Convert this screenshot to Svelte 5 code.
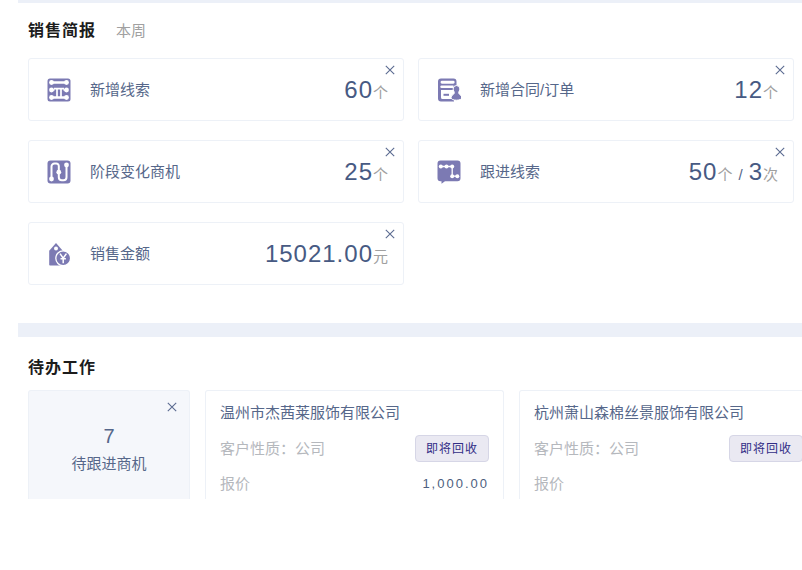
<script>
  let briefs = $state([
    { icon: 'lead', label: '新增线索', parts: [['60', '个']] },
    { icon: 'contract', label: '新增合同/订单', parts: [['12', '个']] },
    { icon: 'stage', label: '阶段变化商机', parts: [['25', '个']] },
    { icon: 'follow', label: '跟进线索', parts: [['50', '个'], ['3', '次']] },
    { icon: 'amount', label: '销售金额', parts: [['15021.00', '元']] },
  ]);

  let todoVisible = $state(true);

  const customers = [
    { name: '温州市杰茜莱服饰有限公司', kind: '公司', quote: '1,000.00' },
    { name: '杭州萧山森棉丝景服饰有限公司', kind: '公司', quote: '' },
  ];

  function removeBrief(item) {
    briefs = briefs.filter((b) => b !== item);
  }
</script>

{#snippet cross()}
  <svg width="10" height="10" viewBox="0 0 10 10" aria-hidden="true">
    <path d="M0.8 0.8l8.4 8.4M9.2 0.8l-8.4 8.4" fill="none" stroke="currentColor" stroke-width="1.1" />
  </svg>
{/snippet}

{#snippet icon(name)}
  <svg class="icon" width="24" height="24" viewBox="0 0 24 24" aria-hidden="true">
    {#if name === 'lead'}
      <rect x="0.5" y="0.5" width="23" height="23" rx="2.5" fill="#7c7ab3" />
      <g stroke="#fff" fill="none" stroke-width="2.4">
        <path d="M4.5 4.5h15M4.5 19.5h15" />
        <path d="M4.5 12h3M16.5 12h3M7 10.6h10M10 10.600v9M14 10.600v9" stroke-width="1.7" />
      </g>
      <g fill="#fff">
        <circle cx="4.5" cy="4.5" r="2.4" /><circle cx="19.5" cy="4.5" r="2.4" />
        <circle cx="4.5" cy="12" r="2.4" /><circle cx="19.5" cy="12" r="2.4" />
        <circle cx="4.5" cy="19.5" r="2.4" /><circle cx="19.5" cy="19.5" r="2.4" />
      </g>
    {:else if name === 'contract'}
      <path fill-rule="evenodd" d="M4 0.5h12.5a3 3 0 0 1 3 3v6a2.5 2.5 0 0 1-2.5 2.5H4v7.5a1.5 1.5 0 0 0 1.5 1.5H17v2.500H4a3 3 0 0 1-3-3v-17a3 3 0 0 1 3-3zM5 2.800a1.300 1.300 0 0 0 0 2.900h11.200a1.300 1.300 0 0 0 0-2.900zM4.500 7.600a1 1 0 0 0 0 2.400h11a1 1 0 0 0 1-1.300v-1.100z" fill="#7c7ab3" />
      <path d="M6.5 16.8h5.5" stroke="#7c7ab3" stroke-width="2" />
      <path d="M19.5 7.5a3.5 3.5 0 0 1 3.4 3.5c0 1.6-1.4 2.3-1.1 4.3.2 1.3 3 1.8 3 4.2 0 1.9-2.3 2.7-5.3 2.7s-5.400-.8-5.400-2.700c0-2.400 2.900-2.900 3.100-4.200.3-2-1.100-2.700-1.100-4.300a3.500 3.500 0 0 1 3.400-3.500z" fill="#7c7ab3" stroke="#fff" stroke-width="1" />
    {:else if name === 'stage'}
      <rect x="0.5" y="0.5" width="23" height="23" rx="3" fill="#7c7ab3" />
      <path d="M4.5 19V6.500a3 3 0 0 1 3-3h1.800a2.500 2.500 0 0 1 2.500 2.500v11.300a3 3 0 0 0 3 3h1.700a3 3 0 0 0 3-3V5" fill="none" stroke="#fff" stroke-width="2" />
      <circle cx="4.5" cy="19" r="2.4" fill="#fff" />
      <circle cx="11.8" cy="12.2" r="2.4" fill="#fff" />
      <circle cx="19.5" cy="5" r="2.4" fill="#fff" />
    {:else if name === 'follow'}
      <path d="M3.5 0.5h17a3 3 0 0 1 3 3v14.7a3 3 0 0 1-3 3H8l-3.500 2.600v-2.600h-1a3 3 0 0 1-3-3V3.500a3 3 0 0 1 3-3z" fill="#7c7ab3" />
      <path d="M3.5 6.5h11.700v9.700h5" fill="none" stroke="#fff" stroke-width="1.3" />
      <g fill="#fff">
        <circle cx="3.8" cy="6.5" r="2" /><circle cx="9.5" cy="6.5" r="2" /><circle cx="15.2" cy="6.5" r="2" />
        <circle cx="15.2" cy="16.2" r="2" /><circle cx="20.3" cy="16.2" r="2" />
      </g>
    {:else}
      <path d="M3 23.5a.8.8 0 0 1-.8-.8V8.8L9 1l6.800 7.800v14.700z" fill="#7c7ab3" />
      <circle cx="9" cy="6.5" r="2" fill="#fff" />
      <circle cx="16.2" cy="16.3" r="7.4" fill="#7c7ab3" stroke="#fff" stroke-width="1.3" />
      <path d="M13 11.6l3.200 4.600 3.200-4.600M16.200 16v5.300M13.500 16.800h5.400" fill="none" stroke="#fff" stroke-width="1.5" />
    {/if}
  </svg>
{/snippet}

<main>
  <section class="brief">
    <header>
      <h2>销售简报</h2>
      <span class="period">本周</span>
    </header>
    <div class="grid">
      {#each briefs as item (item.label)}
        <article class="card stat">
          {@render icon(item.icon)}
          <span class="label">{item.label}</span>
          <div class="value">
            {#each item.parts as [num, unit], i}
              {#if i > 0}<span class="slash">/</span>{/if}<span class="num">{num}</span><span class="unit">{unit}</span>
            {/each}
          </div>
          <button class="close" aria-label="关闭" onclick={() => removeBrief(item)}>{@render cross()}</button>
        </article>
      {/each}
    </div>
  </section>

  <section class="todo">
    <h2>待办工作</h2>
    <div class="row">
      {#if todoVisible}
        <article class="card summary">
          <strong>7</strong>
          <span class="label">待跟进商机</span>
          <button class="close" aria-label="关闭" onclick={() => (todoVisible = false)}>{@render cross()}</button>
        </article>
      {/if}
      {#each customers as c (c.name)}
        <article class="card customer">
          <h3>{c.name}</h3>
          <div class="line tagged">
            <span>客户性质：{c.kind}</span>
            <button class="tag">即将回收</button>
          </div>
          <div class="line">
            <span>报价</span>
            {#if c.quote}<span class="price">{c.quote}</span>{/if}
          </div>
        </article>
      {/each}
    </div>
  </section>
</main>

<style>
  :global(body) {
    margin: 0;
    background: #fff;
  }
  main {
    margin-left: 18px;
    overflow: hidden;
    border-top: 3px solid #ecf0f8;
    font-family: "Liberation Sans", "Noto Sans CJK SC", sans-serif;
    font-size: 15px;
    line-height: 24px;
    color: #56678a;
  }
  h2,
  h3 {
    margin: 0;
  }
  h2 {
    font-size: 16px;
    line-height: 24px;
    letter-spacing: 1px;
    color: #1c1c1c;
  }
  .brief {
    padding: 16px 8px 38px 10px;
    border-bottom: 14px solid #ecf0f8;
  }
  header {
    display: flex;
    align-items: center;
    gap: 20px;
    margin-bottom: 15px;
  }
  .period {
    color: #a0a0a0;
  }
  .grid {
    display: grid;
    grid-template-columns: 1fr 1fr;
    gap: 19px 14px;
  }
  .card {
    box-sizing: border-box;
    position: relative;
    border: 1px solid #edf1f7;
    border-radius: 3px;
  }
  .stat {
    display: flex;
    align-items: center;
    height: 63px;
    padding: 0 15px 0 18px;
  }
  .icon {
    flex: none;
    margin-right: 19px;
  }
  .value {
    display: flex;
    align-items: baseline;
    margin-left: auto;
    padding-top: 3px;
  }
  .num {
    font-size: 24px;
    letter-spacing: 1px;
    color: #475a83;
  }
  .unit {
    color: #a0a0a0;
  }
  .slash {
    margin: 0 6px;
  }
  .close {
    position: absolute;
    top: 6px;
    right: 8px;
    display: flex;
    padding: 0;
    border: 0;
    background: none;
    color: #5b6b91;
    cursor: pointer;
  }
  .todo {
    padding: 19px 0 0 10px;
  }
  .row {
    display: flex;
    gap: 15px;
    margin-top: 10px;
  }
  .row .card {
    flex: none;
    border-bottom: 0;
    border-radius: 3px 3px 0 0;
  }
  .summary {
    display: flex;
    flex-direction: column;
    align-items: center;
    width: 162px;
    padding-top: 33px;
    background: #f5f7fb;
  }
  .summary strong {
    margin-bottom: 4px;
    font-size: 20px;
    font-weight: 400;
  }
  .summary .close {
    top: 11px;
    right: 12px;
  }
  .customer {
    width: 299px;
    padding: 10px 14px 3px;
  }
  h3 {
    font-size: 15px;
    font-weight: 400;
    line-height: 24px;
  }
  .line {
    display: flex;
    align-items: center;
    justify-content: space-between;
    color: #b5b8bd;
  }
  .tagged {
    margin: 10px 0;
  }
  .tag {
    box-sizing: border-box;
    height: 27px;
    padding: 0 10px;
    border: 1px solid #d6d6e6;
    border-radius: 4px;
    background: #eae9f2;
    color: #322e86;
    font: inherit;
    font-size: 12px;
    letter-spacing: 1px;
  }
  .price {
    font-size: 13px;
    letter-spacing: 2px;
    color: #4d5f80;
  }
</style>
